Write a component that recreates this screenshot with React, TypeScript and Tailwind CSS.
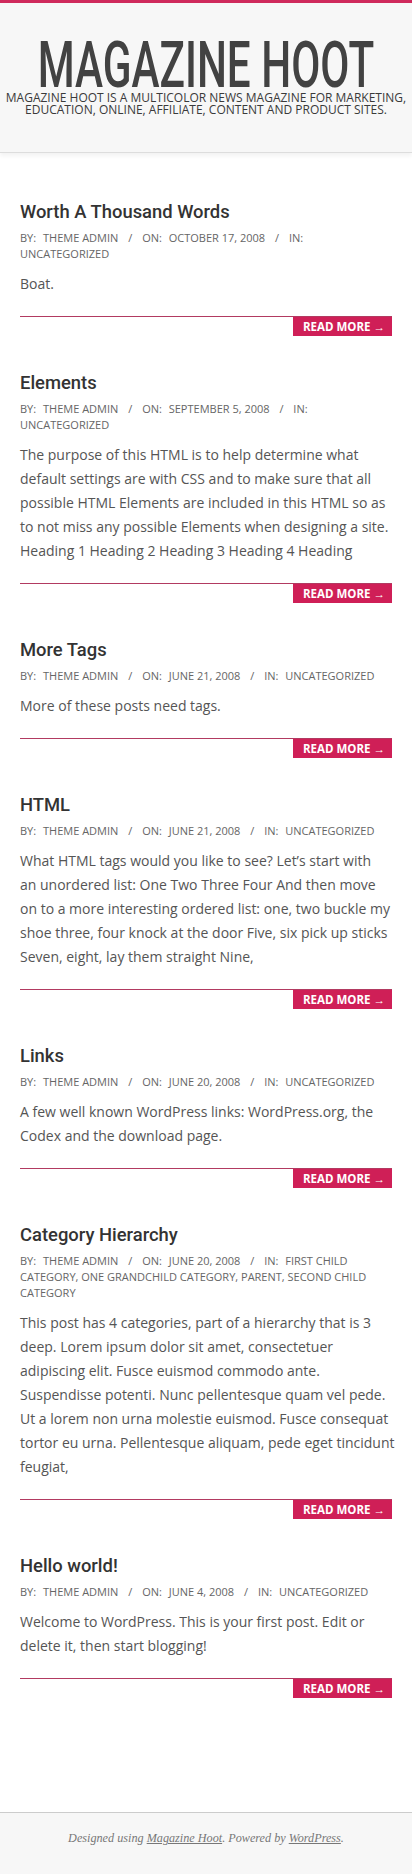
import React from "react";

type Post = {
  title: string;
  date: string;
  cats: string;
  lines: string[];
};

const posts: Post[] = [
  { title: "Worth A Thousand Words", date: "October 17, 2008", cats: "Uncategorized", lines: ["Boat."] },
  {
    title: "Elements",
    date: "September 5, 2008",
    cats: "Uncategorized",
    lines: [
      "The purpose of this HTML is to help determine what",
      "default settings are with CSS and to make sure that all",
      "possible HTML Elements are included in this HTML so as",
      "to not miss any possible Elements when designing a site.",
      "Heading 1 Heading 2 Heading 3 Heading 4 Heading",
    ],
  },
  { title: "More Tags", date: "June 21, 2008", cats: "Uncategorized", lines: ["More of these posts need tags."] },
  {
    title: "HTML",
    date: "June 21, 2008",
    cats: "Uncategorized",
    lines: [
      "What HTML tags would you like to see? Let\u2019s start with",
      "an unordered list: One Two Three Four And then move",
      "on to a more interesting ordered list: one, two buckle my",
      "shoe three, four knock at the door Five, six pick up sticks",
      "Seven, eight, lay them straight Nine,",
    ],
  },
  {
    title: "Links",
    date: "June 20, 2008",
    cats: "Uncategorized",
    lines: ["A few well known WordPress links: WordPress.org, the", "Codex and the download page."],
  },
  {
    title: "Category Hierarchy",
    date: "June 20, 2008",
    cats: "First Child Category, One Grandchild Category, Parent, Second Child Category",
    lines: [
      "This post has 4 categories, part of a hierarchy that is 3",
      "deep. Lorem ipsum dolor sit amet, consectetuer",
      "adipiscing elit. Fusce euismod commodo ante.",
      "Suspendisse potenti. Nunc pellentesque quam vel pede.",
      "Ut a lorem non urna molestie euismod. Fusce consequat",
      "tortor eu urna. Pellentesque aliquam, pede eget tincidunt",
      "feugiat,",
    ],
  },
  {
    title: "Hello world!",
    date: "June 4, 2008",
    cats: "Uncategorized",
    lines: ["Welcome to WordPress. This is your first post. Edit or", "delete it, then start blogging!"],
  },
];

const openSans = { fontFamily: '"Open Sans", "Liberation Sans", sans-serif' };
const roboto = { fontFamily: 'Roboto, "Liberation Sans", sans-serif' };

function Article({ p }: { p: Post }) {
  return (
    <article className="mb-[34px]">
      <h2 className="text-[18.4px] leading-[26px] font-medium text-[#333333]" style={roboto}>
        {p.title}
      </h2>
      <div className="mt-[5px] text-[11px] leading-4 uppercase text-[#666666]" style={openSans}>
        <span className="mr-1">By:</span> <span>Theme Admin</span>{" "}
        <span className="mx-[7px]">/</span> <span className="mr-1">On:</span> <span>{p.date}</span>{" "}
        <span className="mx-[7px]">/</span> <span className="mr-1">In:</span> <span>{p.cats}</span>
      </div>
      <p className="mt-[10px] text-[14px] leading-6 text-[#555555] whitespace-nowrap" style={openSans}>
        {p.lines.map((l, i) => (
          <React.Fragment key={i}>
            {i > 0 && <br />}
            {l}
          </React.Fragment>
        ))}
      </p>
      <div className="mt-5 border-t border-[#b23a61] flex justify-end">
        <span
          className="h-[19px] w-[99px] pl-[10px] bg-[#cf1f57] text-white text-[11.5px] font-bold leading-[19px] uppercase whitespace-nowrap"
          style={openSans}
        >
          Read More <span className="font-normal">&rarr;</span>
        </span>
      </div>
    </article>
  );
}

export default function App() {
  return (
    <div className="bg-white min-h-[1874px] flex flex-col overflow-hidden">
      <div className="h-[3px] bg-[#cf2a5c]" />
      <header className="bg-[#f7f7f7] border-b border-[#dddddd] shadow-[0_3px_4px_rgba(0,0,0,0.05)] pt-[39px] pb-[36px] text-center overflow-hidden">
        <h1
          className="flex justify-center text-[64px] leading-[48px] font-medium text-[#424242] whitespace-nowrap"
          style={roboto}
        >
          <span className="inline-block shrink-0 [transform:scaleX(0.66)]">MAGAZINE HOOT</span>
        </h1>
        <p className="mt-[2px] text-[12px] leading-[12px] uppercase text-[#3a3a3a] -mx-1" style={openSans}>
          Magazine Hoot is a multicolor news magazine for marketing, education, online, affiliate, content and product sites.
        </p>
      </header>
      <main className="px-5 pt-[46px] pb-[80px] flex-1">
        {posts.map((p) => (
          <Article key={p.title} p={p} />
        ))}
      </main>
      <footer
        className="bg-[#f7f7f7] border-t border-[#cccccc] pt-[15px] pb-[29px] text-center text-[12.2px] leading-5 italic text-[#777777]"
        style={{ fontFamily: '"Liberation Serif", serif' }}
      >
        Designed using <span className="underline">Magazine Hoot</span>. Powered by{" "}
        <span className="underline">WordPress</span>.
      </footer>
    </div>
  );
}
